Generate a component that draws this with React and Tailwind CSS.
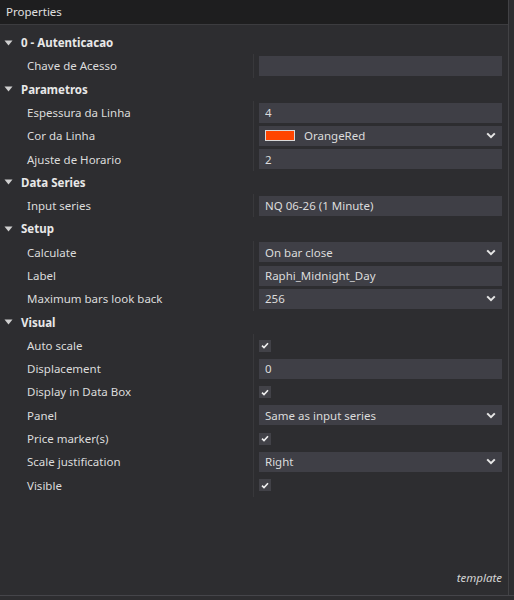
const SECTIONS = [
  {
    name: "0 - Autenticacao",
    items: [{ label: "Chave de Acesso", type: "text", value: "" }],
  },
  {
    name: "Parametros",
    items: [
      { label: "Espessura da Linha", type: "text", value: "4" },
      { label: "Cor da Linha", type: "color", value: "OrangeRed", color: "#ff4500" },
      { label: "Ajuste de Horario", type: "text", value: "2" },
    ],
  },
  {
    name: "Data Series",
    items: [{ label: "Input series", type: "text", value: "NQ 06-26 (1 Minute)" }],
  },
  {
    name: "Setup",
    items: [
      { label: "Calculate", type: "select", value: "On bar close" },
      { label: "Label", type: "text", value: "Raphi_Midnight_Day" },
      { label: "Maximum bars look back", type: "select", value: "256" },
    ],
  },
  {
    name: "Visual",
    items: [
      { label: "Auto scale", type: "check" },
      { label: "Displacement", type: "text", value: "0" },
      { label: "Display in Data Box", type: "check" },
      { label: "Panel", type: "select", value: "Same as input series" },
      { label: "Price marker(s)", type: "check" },
      { label: "Scale justification", type: "select", value: "Right" },
      { label: "Visible", type: "check" },
    ],
  },
];

// Small down-pointing caret used by dropdowns
function Caret() {
  return (
    <svg width="10" height="7" viewBox="0 0 10 7" className="shrink-0">
      <path d="M1.2 1.4 L5 5.2 L8.8 1.4" fill="none" stroke="#e6e6e6" strokeWidth="2" />
    </svg>
  );
}

function Value({ item }) {
  if (item.type === "check") {
    return (
      <div className="w-[12px] h-[12px] bg-[#424248] flex items-center justify-center">
        <svg width="8" height="7" viewBox="0 0 8 7">
          <path d="M1 3.6 L3 5.6 L7 1.2" fill="none" stroke="#f0f0f0" strokeWidth="1.6" />
        </svg>
      </div>
    );
  }
  return (
    <div className="h-[20px] w-full bg-[#3f3f46] flex items-center pl-[6px] pr-[6px] text-[#dcdcdc]">
      {item.type === "color" && (
        <span
          className="w-[30px] h-[11px] border border-[#d9d9d9] mr-[9px] shrink-0"
          style={{ backgroundColor: item.color }}
        />
      )}
      <span className="flex-1 truncate">{item.value}</span>
      {(item.type === "select" || item.type === "color") && <Caret />}
    </div>
  );
}

export default function App() {
  return (
    <div
      className="w-[514px] h-[600px] bg-[#2d2d30] text-[11.5px] text-[#dcdcdc] flex flex-col overflow-hidden"
      style={{ fontFamily: '"Noto Sans", "Open Sans", sans-serif' }}
    >
      <div className="flex flex-1 min-h-0">
        <div className="w-[509px] flex flex-col border-r border-[#424245]">
          {/* Header */}
          <div className="h-[25px] bg-[#1e1e1f] border-b border-[#3c3c3f] flex items-center pl-[6px] text-[#e0e0e0] shrink-0">
            Properties
          </div>

          {/* Grid */}
          <div className="pt-[6px] flex flex-col flex-1">
            {SECTIONS.map((section) => (
              <div key={section.name}>
                <div className="h-[23.3px] flex items-center">
                  <svg width="9" height="6" viewBox="0 0 9 6" className="ml-[4px] mr-[8px]">
                    <path d="M0.5 0.5 L8.5 0.5 L4.5 5.5 Z" fill="#d0d0d0" />
                  </svg>
                  <span className="font-bold text-[#e8e8e8]">{section.name}</span>
                </div>
                {section.items.map((item) => (
                  <div key={item.label} className="h-[23.3px] flex items-center">
                    <div className="w-[253px] pl-[27px] truncate">{item.label}</div>
                    <div className="flex-1 h-full flex items-center border-l border-[#38383b] pl-[5px] pr-[6px]">
                      <Value item={item} />
                    </div>
                  </div>
                ))}
              </div>
            ))}

            <div className="mt-auto h-[26px] flex items-start justify-end pr-[6px] pb-[4px]">
              <span className="italic text-[#d4d4d4]">template</span>
            </div>
          </div>
        </div>
        <div className="flex-1" />
      </div>
      <div className="h-[5px] border-t border-[#45454a] shrink-0" />
    </div>
  );
}
